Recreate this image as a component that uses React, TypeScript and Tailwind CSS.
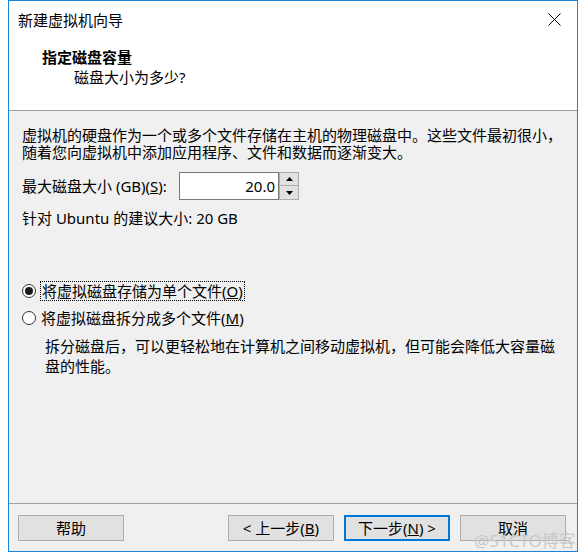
import React from "react";

const font = {
  fontFamily: '"Noto Sans", "Noto Sans CJK SC", sans-serif',
};

function Btn({ children, primary }: { children: React.ReactNode; primary?: boolean }) {
  return (
    <div
      className={
        "w-[106px] h-[26px] flex items-center justify-center bg-[#e1e1e1] text-[15px] text-black " +
        (primary ? "border-2 border-[#0078d7]" : "border border-[#adadad]")
      }
    >
      {children}
    </div>
  );
}

export default function App() {
  return (
    <div className="relative w-[586px] h-[560px] bg-white overflow-hidden" style={font}>
      <div className="ml-[8px] w-[570px] h-[552px] border border-[#1883d7] flex flex-col bg-[#f0f0f0]">
        {/* header */}
        <div className="bg-white h-[109px] flex flex-col">
          <div className="h-[37px] flex items-center justify-between pl-[9px] pr-[16px]">
            <span className="text-[15px] leading-[20px] text-black">新建虚拟机向导</span>
            <svg width="13" height="13" viewBox="0 0 13 13">
              <path d="M0.5 0.5 L12.5 12.5 M12.5 0.5 L0.5 12.5" stroke="#000" strokeWidth="1" />
            </svg>
          </div>
          <div className="mt-[9px] pl-[33px] text-[15px] leading-[20px] font-bold text-black">指定磁盘容量</div>
          <div className="pl-[65px] text-[15px] leading-[20px] text-black">磁盘大小为多少?</div>
        </div>
        <div className="h-px bg-[#a0a0a0]" />
        {/* body */}
        <div className="flex-1 flex flex-col pl-[13px] pt-[16px] text-[15px] text-black">
          <div className="leading-[17px]">
            虚拟机的硬盘作为一个或多个文件存储在主机的物理磁盘中。这些文件最初很小，
            <br />
            随着您向虚拟机中添加应用程序、文件和数据而逐渐变大。
          </div>
          <div className="mt-[11px] flex items-center h-[28px]">
            <span className="w-[157px] leading-[17px]">
              最大磁盘大小 (GB)(<span className="underline">S</span>):
            </span>
            <div className="w-[100px] h-[28px] border border-[#7a7a7a] bg-white flex items-center justify-end pr-[3px]">
              20.0
            </div>
            <div className="w-[20px] h-[28px] flex flex-col">
              <div className="h-[14px] border border-[#adadad] bg-[#e1e1e1] flex items-center justify-center">
                <svg width="7" height="4" viewBox="0 0 7 4">
                  <path d="M0 4 L3.5 0 L7 4 Z" fill="#000" />
                </svg>
              </div>
              <div className="h-[14px] border border-t-0 border-[#adadad] bg-[#e1e1e1] flex items-center justify-center">
                <svg width="7" height="4" viewBox="0 0 7 4">
                  <path d="M0 0 L3.5 4 L7 0 Z" fill="#000" />
                </svg>
              </div>
            </div>
          </div>
          <div className="mt-[10px] leading-[17px]">针对 Ubuntu 的建议大小: 20 GB</div>

          <div className="mt-[54px] h-[20px] flex items-center">
            <div className="w-[14px] h-[14px] rounded-full border border-[#333] bg-white flex items-center justify-center">
              <div className="w-[8px] h-[8px] rounded-full bg-[#1a1a1a]" />
            </div>
            <span className="ml-[4px] h-[20px] leading-[18px] px-[1px] border border-dotted border-black">
              将虚拟磁盘存储为单个文件(<span className="underline">O</span>)
            </span>
          </div>
          <div className="mt-[7px] h-[20px] flex items-center">
            <div className="w-[14px] h-[14px] rounded-full border border-[#333] bg-white" />
            <span className="ml-[5px] leading-[20px]">
              将虚拟磁盘拆分成多个文件(<span className="underline">M</span>)
            </span>
          </div>
          <div className="mt-[8px] pl-[23px] leading-[20px]">
            拆分磁盘后，可以更轻松地在计算机之间移动虚拟机，但可能会降低大容量磁
            <br />
            盘的性能。
          </div>
        </div>
        <div className="h-px bg-[#a0a0a0]" />
        {/* footer */}
        <div className="h-[47px] flex items-start pt-[11px] pl-[9px]">
          <Btn>帮助</Btn>
          <div className="ml-[104px]">
            <Btn>
              &lt; 上一步(<span className="underline">B</span>)
            </Btn>
          </div>
          <div className="ml-[10px]">
            <Btn primary>
              下一步(<span className="underline">N</span>) &gt;
            </Btn>
          </div>
          <div className="ml-[10px]">
            <Btn>取消</Btn>
          </div>
        </div>
      </div>
      <div className="absolute left-[474px] top-[530px] text-[17px] leading-[22px] text-[#c8c8c8]">
        @51CTO博客
      </div>
    </div>
  );
}
